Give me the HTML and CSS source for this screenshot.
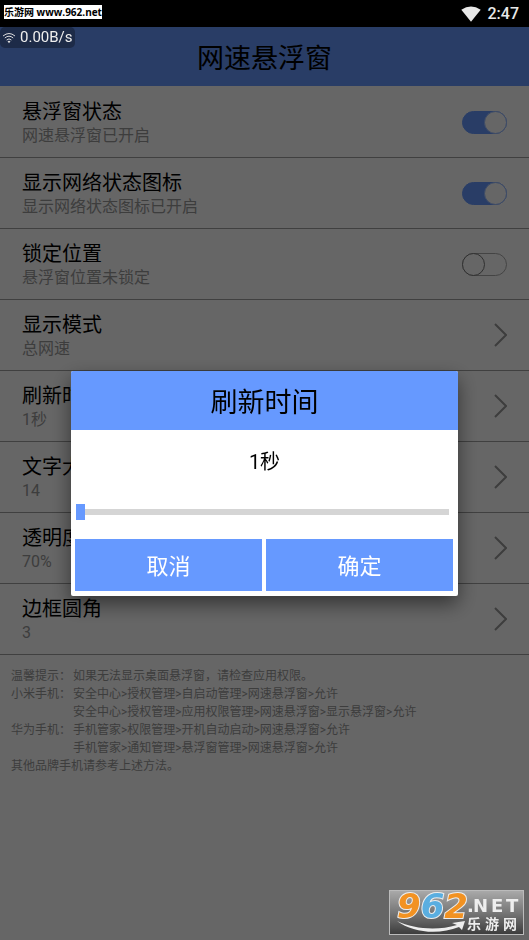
FILE: index.html
```html
<!DOCTYPE html>
<html lang="zh-CN">
<head>
<meta charset="utf-8">
<meta name="viewport" content="width=device-width, initial-scale=1">
<title>网速悬浮窗</title>
<link rel="stylesheet" href="styles.css">
</head>
<body>
<div class="statusbar">
  <span class="site-tag">乐游网 www.962.net</span>
  <div class="status-right">
    <svg class="signal" viewBox="0 0 20 16" aria-hidden="true"><path d="M0.3 3.8Q10-3 19.7 3.8L10 15.7Z"/></svg>
    <time>2:47</time>
  </div>
</div>
<main class="app">
  <h1 class="page-title">网速悬浮窗</h1>
  <ul class="settings">
    <li><label class="row" for="float"><span class="text"><span class="name">悬浮窗状态</span><span class="note">网速悬浮窗已开启</span></span><input class="switch" id="float" type="checkbox" checked></label></li>
    <li><label class="row" for="icon"><span class="text"><span class="name">显示网络状态图标</span><span class="note">显示网络状态图标已开启</span></span><input class="switch" id="icon" type="checkbox" checked></label></li>
    <li><label class="row" for="lock"><span class="text"><span class="name">锁定位置</span><span class="note">悬浮窗位置未锁定</span></span><input class="switch" id="lock" type="checkbox"></label></li>
    <li><button class="row" type="button"><span class="text"><span class="name">显示模式</span><span class="note">总网速</span></span><svg class="chevron" viewBox="0 0 13 24"><path d="M1 1L12 12L1 23"/></svg></button></li>
    <li><button class="row" type="button"><span class="text"><span class="name">刷新时间</span><span class="note">1秒</span></span><svg class="chevron" viewBox="0 0 13 24"><path d="M1 1L12 12L1 23"/></svg></button></li>
    <li><button class="row" type="button"><span class="text"><span class="name">文字大小</span><span class="note">14</span></span><svg class="chevron" viewBox="0 0 13 24"><path d="M1 1L12 12L1 23"/></svg></button></li>
    <li><button class="row" type="button"><span class="text"><span class="name">透明度</span><span class="note">70%</span></span><svg class="chevron" viewBox="0 0 13 24"><path d="M1 1L12 12L1 23"/></svg></button></li>
    <li><button class="row" type="button"><span class="text"><span class="name">边框圆角</span><span class="note">3</span></span><svg class="chevron" viewBox="0 0 13 24"><path d="M1 1L12 12L1 23"/></svg></button></li>
  </ul>
  <div class="tips">
    <span>温馨提示：</span><span>如果无法显示桌面悬浮窗，请检查应用权限。</span>
    <span>小米手机：</span><span>安全中心&gt;授权管理&gt;自启动管理&gt;网速悬浮窗&gt;允许</span>
    <span class="more">安全中心&gt;授权管理&gt;应用权限管理&gt;网速悬浮窗&gt;显示悬浮窗&gt;允许</span>
    <span>华为手机：</span><span>手机管家&gt;权限管理&gt;开机自动启动&gt;网速悬浮窗&gt;允许</span>
    <span class="more">手机管家&gt;通知管理&gt;悬浮窗管理&gt;网速悬浮窗&gt;允许</span>
    <span class="full">其他品牌手机请参考上述方法。</span>
  </div>
</main>
<div class="overlay">
  <section class="dialog" role="dialog" aria-labelledby="dialog-title">
    <h2 class="dialog-title" id="dialog-title">刷新时间</h2>
    <label class="value" for="interval">1秒</label>
    <input class="slider" id="interval" type="range" min="1" max="10" value="1">
    <div class="actions"><button type="button">取消</button><button type="button">确定</button></div>
  </section>
</div>
<div class="speed">
  <svg viewBox="0 0 14 12" aria-hidden="true"><path d="M1 4Q7-1 13 4M2.8 6Q7 2.4 11.2 6M4.6 8Q7 5.8 9.4 8"/><path class="dot" d="M5.5 9.2Q7 8.2 8.5 9.2L7 11.3Z"/></svg>
  <span>0.00B/s</span>
</div>
<svg class="watermark" viewBox="0 0 135 45" role="img" aria-label="962.NET 乐游网">
  <defs><linearGradient id="plate" x2="0" y2="1"><stop offset="0" stop-color="#aaa"/><stop offset=".5" stop-color="#777"/><stop offset="1" stop-color="#3c3c3c"/></linearGradient></defs>
  <rect x=".5" y=".5" width="134" height="44" fill="url(#plate)" stroke="#bbb"/>
  <path class="smile" d="M8 31C25 39 48 41 68 35L63 33L76 31L73 40L70 37C50 45 24 43 8 31Z"/>
  <text class="digits" x="8" y="28"><tspan class="orange">9</tspan><tspan class="blue">6</tspan><tspan class="orange">2</tspan></text>
  <text class="net" y="22"><tspan x="78">.</tspan><tspan x="84">N</tspan><tspan x="102">E</tspan><tspan x="117">T</tspan></text>
  <text class="cn" y="39"><tspan x="78">乐</tspan><tspan x="96">游</tspan><tspan x="114">网</tspan></text>
</svg>
</body>
</html>
```
FILE: styles.css
```css
*, *::before { box-sizing: border-box; }
html, body { min-height: 100%; }
body {
  margin: 0;
  background: #fff;
  color: #000;
  font-family: Roboto, "Noto Sans CJK SC", sans-serif;
}
button { font-family: inherit; border: 0; margin: 0; }
.statusbar {
  display: flex;
  justify-content: space-between;
  align-items: center;
  height: 27px;
  padding: 0 10px 0 4px;
  background: #000;
  color: #e8e8e8;
}
.site-tag {
  height: 14px;
  margin-bottom: 3px;
  background: #fff;
  color: #000;
  font: bold 10px/14px "Open Sans", "Noto Sans CJK SC", sans-serif;
}
.status-right {
  display: flex;
  align-items: center;
  gap: 7px;
  font-size: 16px;
  line-height: 27px;
  font-weight: 500;
}
.signal { width: 20px; height: 16px; fill: #e8e8e8; }
.page-title,
.dialog-title {
  margin: 0;
  padding-top: 5px;
  background: #69f;
  font-size: 27px;
  line-height: 54px;
  font-weight: 400;
  text-align: center;
}
.settings { margin: 0; padding: 1px 0 0; list-style: none; }
.settings li { border-bottom: 1px solid #a0a0a0; }
.row {
  display: flex;
  width: 100%;
  align-items: center;
  justify-content: space-between;
  padding: 9px 22px;
  background: none;
  text-align: left;
}
.text { display: flex; flex-direction: column; padding-top: 4px; }
.name { font-size: 20px; line-height: 24px; color: #000; }
.note { font-size: 16px; line-height: 24px; color: #999; }
.switch {
  appearance: none;
  display: flex;
  width: 45px;
  height: 23px;
  margin: 0;
  border: 1px solid #aaa;
  border-radius: 12px;
}
.switch::before {
  content: "";
  width: 23px;
  height: 23px;
  margin: -1px;
  border: 1px solid #777;
  border-radius: 50%;
  background: #fff;
}
.switch:checked { justify-content: flex-end; background: #69f; border-color: #69f; }
.switch:checked::before { border-color: #9bf; }
.chevron { width: 13px; height: 24px; fill: none; stroke: #999; stroke-width: 2; }
.tips {
  display: grid;
  grid-template-columns: 62px 1fr;
  padding: 12px 11px;
  color: #999;
  font-size: 12px;
  line-height: 18px;
}
.more { grid-column: 2; }
.full { grid-column: 1 / -1; }
.overlay {
  position: fixed;
  inset: 27px 0 0;
  display: flex;
  align-items: center;
  padding: 0 71px;
  background: rgba(0, 0, 0, .6);
}
.dialog {
  width: 100%;
  overflow: hidden;
  border-radius: 2px;
  background: #fff;
  box-shadow: 0 8px 20px rgba(0, 0, 0, .5);
}
.value {
  display: block;
  padding: 20px 0 30px;
  font-size: 20px;
  line-height: 24px;
  text-align: center;
}
.slider {
  appearance: none;
  display: block;
  width: calc(100% - 14px);
  height: 16px;
  margin: 0 9px 19px 5px;
  background: linear-gradient(#d5d5d5, #d5d5d5) center / 100% 6px no-repeat;
}
.slider::-webkit-slider-thumb {
  appearance: none;
  width: 9px;
  height: 16px;
  background: #69f;
}
.actions {
  display: grid;
  grid-template-columns: 1fr 1fr;
  gap: 4px;
  padding: 0 5px 5px 4px;
}
.actions button {
  padding: 4px 0 0;
  background: #69f;
  color: #fff;
  font-size: 22px;
  line-height: 48px;
}
.speed {
  position: absolute;
  top: 27px;
  left: 0;
  display: flex;
  align-items: center;
  gap: 4px;
  padding: 0 2px;
  border-radius: 5px;
  background: #1d2b48;
  color: #eee;
  font-size: 15px;
  line-height: 21px;
}
.speed svg { width: 14px; height: 12px; fill: none; stroke: #ddd; }
.speed .dot { fill: #ddd; stroke: none; }
.watermark {
  position: fixed;
  right: 5px;
  bottom: 5px;
  width: 135px;
  height: 45px;
  overflow: visible;
}
.digits {
  font: oblique bold 34px "DejaVu Sans", sans-serif;
  stroke: #eee;
  stroke-width: 2px;
  paint-order: stroke;
}
.orange { fill: #f29222; }
.blue { fill: #5aaee0; }
.net { font: bold 18px "DejaVu Sans", sans-serif; fill: #eee; }
.cn { font: bold 14px "Noto Sans CJK SC", sans-serif; fill: #eee; }
.smile { fill: #eee; }
```
